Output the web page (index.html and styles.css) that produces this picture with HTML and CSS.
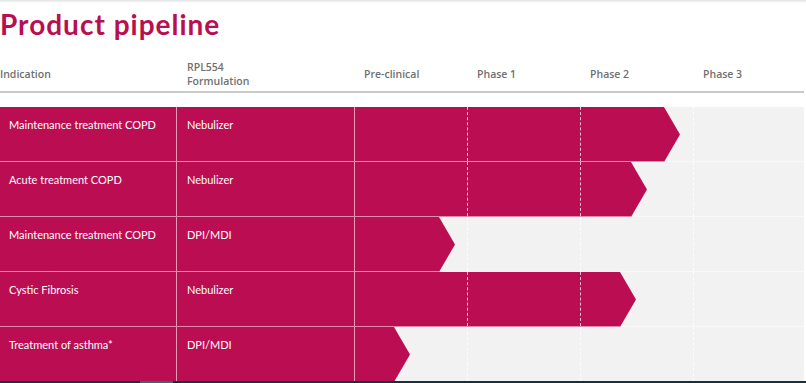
FILE: index.html
```html
<!DOCTYPE html>
<html>
<head>
<meta charset="utf-8">
<link rel="stylesheet" href="styles.css">
</head>
<body>
<div class="page">
  <div class="topline"></div>
  <h1 class="title">Product pipeline</h1>
  <div class="head">
    <div class="hcell c-ind">Indication</div>
    <div class="hcell c-form">RPL554<br>Formulation</div>
    <div class="hcell c-ph">Pre-clinical</div>
    <div class="hcell c-ph">Phase 1</div>
    <div class="hcell c-ph">Phase 2</div>
    <div class="hcell c-ph3">Phase 3</div>
  </div>
  <div class="rows">
    <div class="row">
      <div class="cell c-ind">Maintenance treatment COPD</div>
      <div class="cell c-form">Nebulizer</div>
      <div class="phases">
        <div class="bar" style="width:325px"></div>
        <div class="ph"></div><div class="ph"></div><div class="ph"></div><div class="ph last"></div>
      </div>
    </div>
    <div class="row">
      <div class="cell c-ind">Acute treatment COPD</div>
      <div class="cell c-form">Nebulizer</div>
      <div class="phases">
        <div class="bar" style="width:292px"></div>
        <div class="ph"></div><div class="ph"></div><div class="ph"></div><div class="ph last"></div>
      </div>
    </div>
    <div class="row">
      <div class="cell c-ind">Maintenance treatment COPD</div>
      <div class="cell c-form">DPI/MDI</div>
      <div class="phases">
        <div class="bar" style="width:100px"></div>
        <div class="ph"></div><div class="ph"></div><div class="ph"></div><div class="ph last"></div>
      </div>
    </div>
    <div class="row">
      <div class="cell c-ind">Cystic Fibrosis</div>
      <div class="cell c-form">Nebulizer</div>
      <div class="phases">
        <div class="bar" style="width:281px"></div>
        <div class="ph"></div><div class="ph"></div><div class="ph"></div><div class="ph last"></div>
      </div>
    </div>
    <div class="row">
      <div class="cell c-ind">Treatment of asthma*</div>
      <div class="cell c-form">DPI/MDI</div>
      <div class="phases">
        <div class="bar" style="width:55px"></div>
        <div class="ph"></div><div class="ph"></div><div class="ph"></div><div class="ph last"></div>
      </div>
    </div>
  </div>
  <div class="scrollbar"><div class="thumb"></div></div>
</div>
</body>
</html>
```
FILE: styles.css
```css
html, body {
  margin: 0;
  padding: 0;
  background: #ffffff;
}
body {
  font-family: Lato, "Open Sans", sans-serif;
  width: 806px;
  height: 383px;
  overflow: hidden;
}
.page {
  position: relative;
  width: 806px;
  height: 383px;
  display: flex;
  flex-direction: column;
}
.topline {
  height: 3px;
  background: linear-gradient(#e2e2e2, #ffffff);
}
.title {
  margin: 4px 0 0 0;
  font-size: 28px;
  line-height: 34px;
  font-weight: 700;
  color: #b80f50;
  letter-spacing: 1px;
}
.head {
  display: flex;
  align-items: center;
  box-sizing: border-box;
  margin-top: 10px;
  padding-top: 6px;
  height: 42px;
  width: 804px;
  border-bottom: 2px solid #c9c9c9;
  color: #707070;
  font-family: "Open Sans", Lato, sans-serif;
  font-weight: 600;
  font-size: 10.5px;
  line-height: 14px;
}
.hcell.c-ind { width: 177px; }
.hcell.c-form { width: 168px; padding-left: 10px; }
.hcell.c-ph { width: 104px; padding-left: 9px; }
.hcell.c-ph3 { width: 101px; padding-left: 9px; }
.rows {
  margin-top: 14px;
  width: 804px;
  display: flex;
  flex-direction: column;
}
.row {
  display: flex;
  height: 54px;
  border-bottom: 1px solid #f8f8f8;
  flex-shrink: 0;
  position: relative;
}
.row::after {
  content: "";
  position: absolute;
  left: 0;
  width: 355px;
  bottom: -1px;
  height: 1px;
  background: #e18aab;
}
.cell {
  background: #bb0e52;
  color: #ffffff;
  font-size: 11px;
  line-height: 14px;
  padding-top: 11px;
  box-sizing: border-box;
}
.cell.c-ind {
  width: 177px;
  padding-left: 9px;
  border-right: 1px solid #e79bb8;
}
.cell.c-form {
  width: 178px;
  padding-left: 10px;
  border-right: 1px solid #e79bb8;
}
.phases {
  position: relative;
  flex: 1;
  display: flex;
  background: #f2f2f2;
}
.bar {
  position: absolute;
  left: 0;
  top: 0;
  bottom: -1px;
  background: #bb0e52;
  clip-path: polygon(0 0, calc(100% - 16px) 0, 100% 50%, calc(100% - 16px) 100%, 0 100%);
}
.bar::after {
  content: "";
  position: absolute;
  left: 0;
  right: 0;
  bottom: 0;
  height: 1px;
  background: #e18aab;
}
.ph {
  position: relative;
  width: 112px;
  border-right: 1px dashed rgba(255, 255, 255, 0.75);
}
.ph.last {
  width: 110px;
  border-right: none;
}
.scrollbar {
  position: absolute;
  left: 0;
  right: 0;
  bottom: 0;
  height: 2px;
  background: #1b2e3b;
}
.thumb {
  margin-left: 140px;
  width: 33px;
  height: 2px;
  background: #3d6470;
}
```
